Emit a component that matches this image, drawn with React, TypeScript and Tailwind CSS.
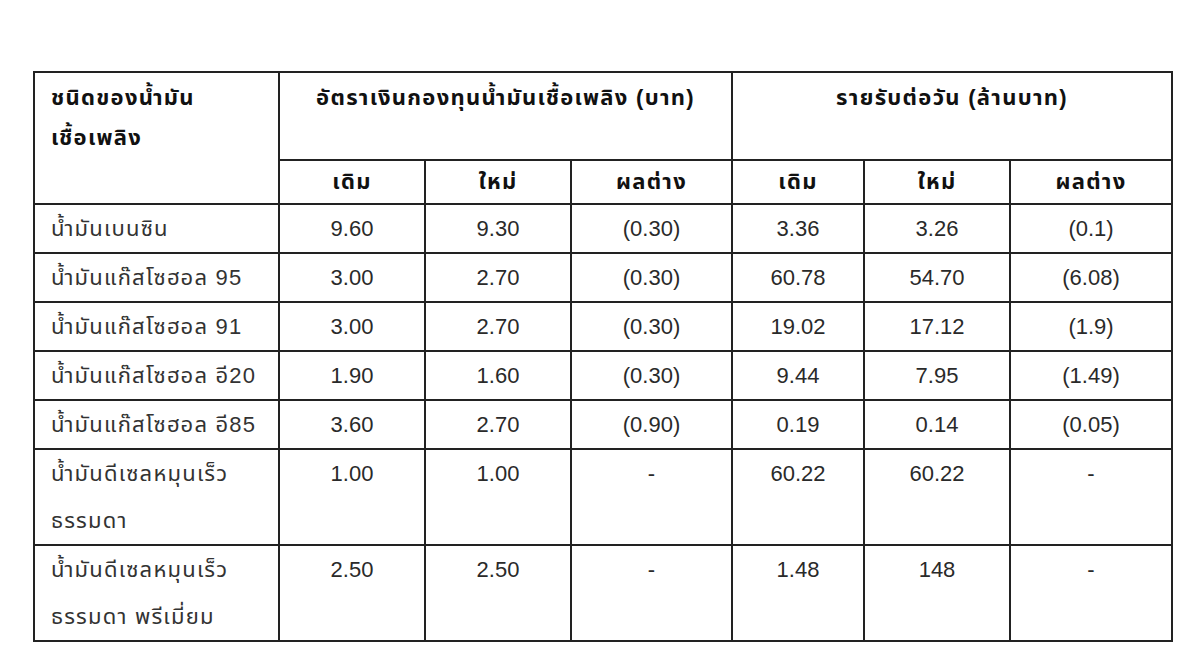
const font = {
  fontFamily: '"Liberation Sans", "Noto Sans Thai", Tahoma, Arial, sans-serif',
};

interface IRow {
  name: string[];
  oldRate: string;
  newRate: string;
  rateDiff: string;
  oldIncome: string;
  newIncome: string;
  incomeDiff: string;
}

const rows: IRow[] = [
  { name: ["น้ำมันเบนซิน"], oldRate: "9.60", newRate: "9.30", rateDiff: "(0.30)", oldIncome: "3.36", newIncome: "3.26", incomeDiff: "(0.1)" },
  { name: ["น้ำมันแก๊สโซฮอล 95"], oldRate: "3.00", newRate: "2.70", rateDiff: "(0.30)", oldIncome: "60.78", newIncome: "54.70", incomeDiff: "(6.08)" },
  { name: ["น้ำมันแก๊สโซฮอล 91"], oldRate: "3.00", newRate: "2.70", rateDiff: "(0.30)", oldIncome: "19.02", newIncome: "17.12", incomeDiff: "(1.9)" },
  { name: ["น้ำมันแก๊สโซฮอล อี20"], oldRate: "1.90", newRate: "1.60", rateDiff: "(0.30)", oldIncome: "9.44", newIncome: "7.95", incomeDiff: "(1.49)" },
  { name: ["น้ำมันแก๊สโซฮอล อี85"], oldRate: "3.60", newRate: "2.70", rateDiff: "(0.90)", oldIncome: "0.19", newIncome: "0.14", incomeDiff: "(0.05)" },
  { name: ["น้ำมันดีเซลหมุนเร็ว", "ธรรมดา"], oldRate: "1.00", newRate: "1.00", rateDiff: "-", oldIncome: "60.22", newIncome: "60.22", incomeDiff: "-" },
  { name: ["น้ำมันดีเซลหมุนเร็ว", "ธรรมดา พรีเมี่ยม"], oldRate: "2.50", newRate: "2.50", rateDiff: "-", oldIncome: "1.48", newIncome: "148", incomeDiff: "-" },
];

const cell = "border-2 border-[#222] p-0 align-top";

function App() {
  return (
    <div className="min-h-[667px] bg-white pt-[71px] pl-[33px]" style={font}>
      <table className="border-collapse border-2 border-[#222] text-[22px] text-[#2a2a2a]">
        <colgroup>
          <col className="w-[245px]" />
          <col className="w-[146px]" />
          <col className="w-[146px]" />
          <col className="w-[161px]" />
          <col className="w-[132px]" />
          <col className="w-[146px]" />
          <col className="w-[162px]" />
        </colgroup>
        <thead className="font-bold text-[#111] tracking-[1.3px]">
          <tr className="h-[88px]">
            <th rowSpan={2} className={`${cell} pl-4 pt-[5px] text-left leading-[40px]`}>
              ชนิดของน้ำมัน
              <br />
              เชื้อเพลิง
            </th>
            <th colSpan={3} className={`${cell} pt-[5px] text-center leading-[40px]`}>
              อัตราเงินกองทุนน้ำมันเชื้อเพลิง (บาท)
            </th>
            <th colSpan={3} className={`${cell} pt-[5px] text-center leading-[40px]`}>
              รายรับต่อวัน (ล้านบาท)
            </th>
          </tr>
          <tr className="h-[44px]">
            {["เดิม", "ใหม่", "ผลต่าง", "เดิม", "ใหม่", "ผลต่าง"].map((h, i) => (
              <th key={i} className="border-2 border-[#222] p-0 text-center align-middle leading-[40px]">
                {h}
              </th>
            ))}
          </tr>
        </thead>
        <tbody>
          {rows.map((r) => (
            <tr key={r.name.join(" ")}>
              <td className={`${cell} pl-4 leading-[47px] text-[#333] tracking-[1.2px]`}>
                {r.name.map((line, i) => (
                  <div key={i}>{line}</div>
                ))}
              </td>
              {[r.oldRate, r.newRate, r.rateDiff, r.oldIncome, r.newIncome, r.incomeDiff].map((v, i) => (
                <td key={i} className={`${cell} text-center leading-[47px]`}>
                  {v}
                </td>
              ))}
            </tr>
          ))}
        </tbody>
      </table>
    </div>
  );
}

export default App;
